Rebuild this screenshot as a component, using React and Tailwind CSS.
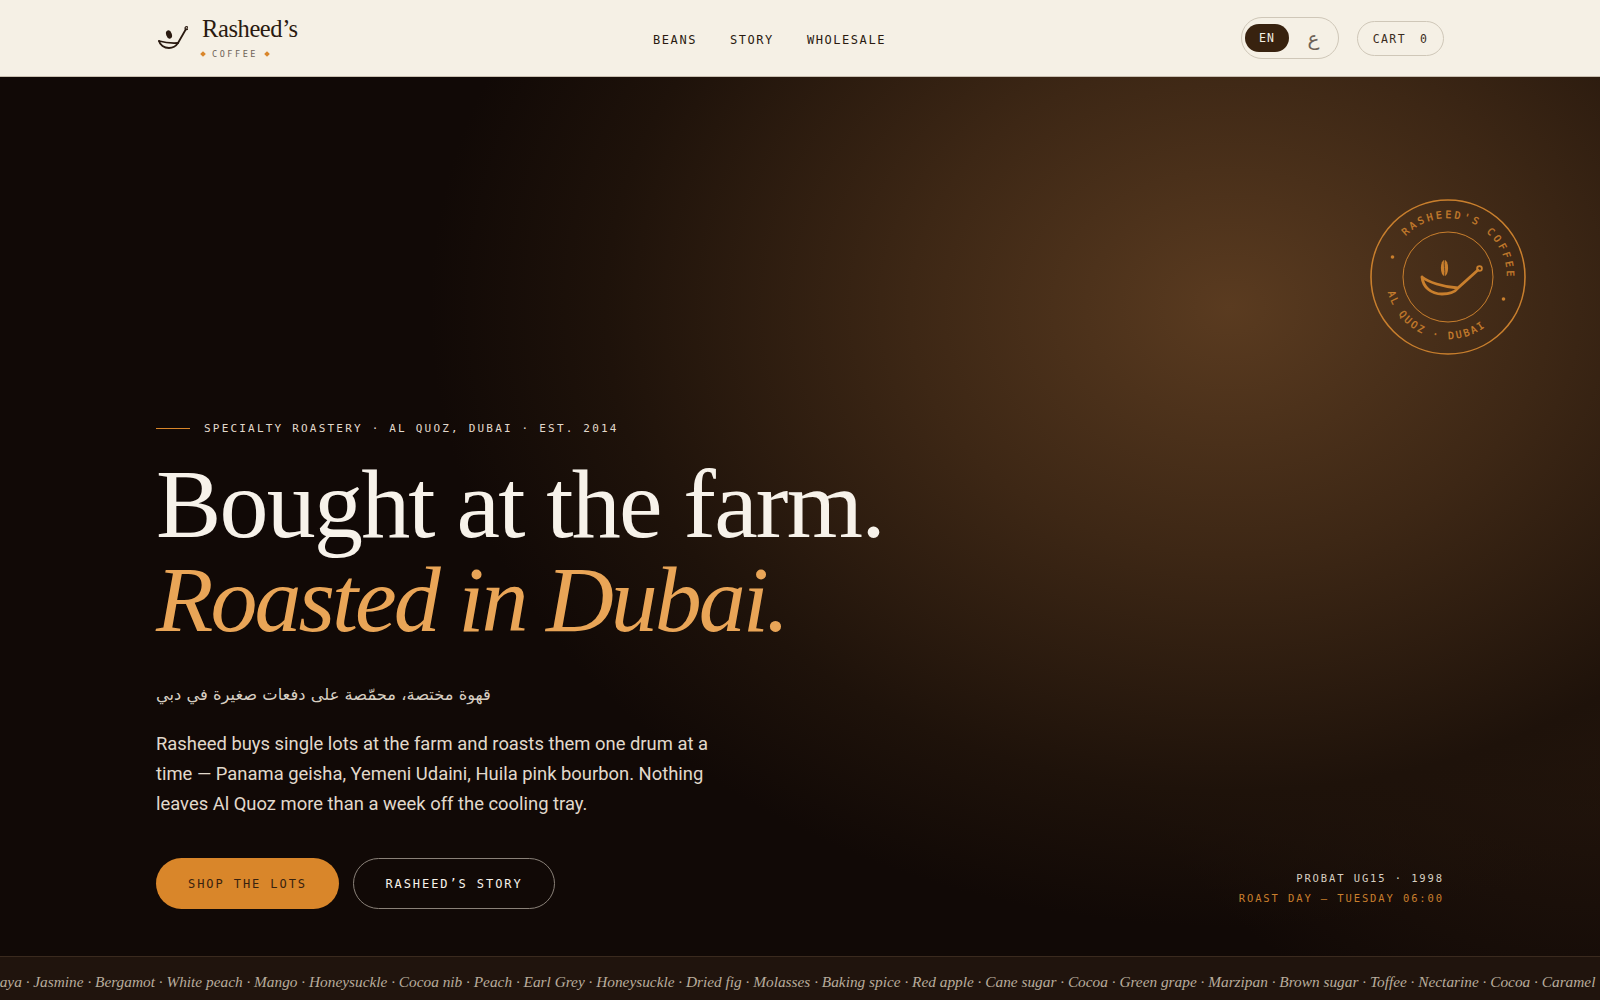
const notes = ["Papaya","Jasmine","Bergamot","White peach","Mango","Honeysuckle","Cocoa nib","Peach","Earl Grey","Honeysuckle","Dried fig","Molasses","Baking spice","Red apple","Cane sugar","Cocoa","Green grape","Marzipan","Brown sugar","Toffee","Nectarine","Cocoa","Caramel"];

function LogoMark() {
  return (
    <svg width="32" height="26" viewBox="0 0 32 26" fill="none" stroke="#2a1a10" strokeLinecap="round" className="shrink-0">
      <path d="M3 16 C8 17.5 14 18.5 22 18" strokeWidth="1.8" />
      <path d="M3 16 C4 20 8 23 13 23 C17 23 20 21 22 18 L30 4" strokeWidth="1.8" />
      <circle cx="30.5" cy="3.2" r="1.5" strokeWidth="1.2" />
      <ellipse cx="13" cy="9.5" rx="2.8" ry="4.2" fill="#2a1a10" stroke="none" transform="rotate(-20 13 9.5)" />
    </svg>
  );
}

function Seal() {
  const c = "#c97f2d";
  return (
    <svg width="160" height="160" viewBox="0 0 160 160" fill="none" className="absolute top-[120px] right-[72px]">
      <defs>
        <path id="sealTop" d="M37.6 39 A59 59 0 0 1 139 80 A59 59 0 0 1 130 110" />
        <path id="sealBottom" d="M19.8 95 A62 62 0 0 0 115.6 130.8 A62 62 0 0 0 138.3 101.2" />
      </defs>
      <circle cx="80" cy="80" r="77" stroke={c} strokeWidth="1.6" />
      <circle cx="80" cy="80" r="45" stroke={c} strokeWidth="1" />
      <circle cx="24.5" cy="60" r="1.8" fill={c} />
      <circle cx="135.5" cy="102" r="1.8" fill={c} />
      <text fill={c} stroke={c} strokeWidth="0.25" fontSize="10" fontFamily="'DejaVu Sans Mono', monospace" letterSpacing="2.85">
        <textPath href="#sealTop">RASHEED'S COFFEE</textPath>
      </text>
      <text fill={c} stroke={c} strokeWidth="0.25" fontSize="10" fontFamily="'DejaVu Sans Mono', monospace" letterSpacing="2.2">
        <textPath href="#sealBottom">AL QUOZ · DUBAI</textPath>
      </text>
      <path d="M54 80 C60 85 75 90 90 91 M54 80 C55 90 63 97 74 97 C82 97 87 95 90 91 L110 73" stroke={c} strokeWidth="2.8" strokeLinecap="round" />
      <circle cx="111.5" cy="71.5" r="2.4" stroke={c} strokeWidth="1.8" />
      <ellipse cx="76.5" cy="71" rx="3.6" ry="8" fill={c} />
      <path d="M76.5 63 C75.5 68 77.5 73 76.5 79" stroke="#5a3b20" strokeWidth="0.9" />
    </svg>
  );
}

export default function App() {
  return (
    <div className="h-[1000px] w-[1600px] overflow-hidden flex flex-col bg-[#0f0805] font-['DejaVu_Sans_Mono',monospace]">
      <header className="h-[77px] shrink-0 bg-[#f5f0e5] border-b border-[#c9bfb0] px-[156px] flex items-center justify-between">
        <div className="w-[142px] flex items-center gap-[14px] whitespace-nowrap">
          <LogoMark />
          <div className="flex flex-col items-start">
            <span className="font-['Liberation_Serif',serif] text-[24.5px] leading-[30px] tracking-[-0.4px] text-[#2a1a10] -mt-[2px]">Rasheed’s</span>
            <span className="flex items-center gap-[7px] mt-[4px] -ml-[1px]">
              <span className="w-[4px] h-[4px] rotate-45 bg-[#d9862a]" />
              <span className="text-[8.5px] leading-[12px] tracking-[0.3em] text-[#6e6358]">COFFEE</span>
              <span className="w-[4px] h-[4px] rotate-45 bg-[#d9862a]" />
            </span>
          </div>
        </div>
        <nav className="flex items-center gap-[33px] mt-[3px] text-[12px] tracking-[0.13em] text-[#2a1a10]">
          <span>BEANS</span>
          <span>STORY</span>
          <span>WHOLESALE</span>
        </nav>
        <div className="flex items-center justify-end gap-[18px]">
          <div className="w-[98px] h-[42px] rounded-full border border-[#cfc7b8] flex items-center pl-[3px]">
            <span className="w-[44px] h-[28px] pt-[1px] rounded-full bg-[#38220f] text-[#f5f0e5] text-[11.5px] tracking-[0.1em] flex items-center justify-center">EN</span>
            <span className="flex-1 text-center text-[20px] leading-none text-[#6e6358] font-['DejaVu_Sans',sans-serif]">ع</span>
          </div>
          <div className="w-[87px] h-[35px] pt-[3px] rounded-full border border-[#cfc7b8] flex items-center justify-center gap-[14px] text-[11.5px] tracking-[0.12em] text-[#3a2c20]">
            <span>CART</span>
            <span>0</span>
          </div>
        </div>
      </header>

      <main className="relative flex-1 flex flex-col justify-end px-[156px] pb-[47px] bg-[#110906]">
        <div className="absolute inset-0 bg-[radial-gradient(ellipse_800px_620px_at_1230px_230px,#5a3b20_0%,#3d2715_40%,#1e120a_78%,rgba(17,9,6,0)_100%),radial-gradient(ellipse_640px_820px_at_1600px_170px,rgba(74,47,25,0.8)_0%,rgba(17,9,6,0)_100%)]" />
        <Seal />
        <div className="relative">
          <div className="flex items-center gap-[14px] text-[11px] tracking-[0.2em] text-[#e2d9cc]">
            <span className="w-[34px] h-px bg-[#d9862a]" />
            <span>SPECIALTY ROASTERY · AL QUOZ, DUBAI · EST. 2014</span>
          </div>
          <h1 className="mt-[20px] font-['Liberation_Serif',serif] font-normal text-[98px] leading-[94px] tracking-[-1.8px] text-[#f7f2ea]">
            Bought at the farm.
            <br />
            <em className="text-[94px] tracking-[-3px] text-[#e9a557]">Roasted in Dubai.</em>
          </h1>
          <p dir="rtl" className="mt-[33px] text-left w-fit font-['DejaVu_Sans',sans-serif] text-[16.3px] leading-[32px] text-[#d8cfc2]">قهوة مختصة، محمّصة على دفعات صغيرة في دبي</p>
          <p className="mt-[18px] w-[560px] font-['Roboto',sans-serif] text-[18.4px] leading-[30px] text-[#e2d9cc]">Rasheed buys single lots at the farm and roasts them one drum at a time — Panama geisha, Yemeni Udaini, Huila pink bourbon. Nothing leaves Al Quoz more than a week off the cooling tray.</p>
          <div className="mt-[39px] flex items-end justify-between">
            <div className="flex gap-[14px]">
              <span className="w-[183px] h-[51px] rounded-full bg-[#d9862a] text-[#38220f] text-[12px] tracking-[0.16em] flex items-center justify-center">SHOP THE LOTS</span>
              <span className="w-[202px] h-[51px] rounded-full border border-[#8a8178] text-[#f7f2ea] text-[12px] tracking-[0.16em] flex items-center justify-center">RASHEED’S STORY</span>
            </div>
            <div className="flex flex-col items-end gap-[7px] pb-[4px] text-[10.5px] leading-[13px] tracking-[0.18em]">
              <span className="text-[#d8cfc2]">PROBAT UG15 · 1998</span>
              <span className="text-[#c97f2d]">ROAST DAY — TUESDAY 06:00</span>
            </div>
          </div>
        </div>
      </main>

      <footer className="h-[44px] shrink-0 pt-[7px] border-t border-[#3a2a1e] bg-[#20140d] overflow-hidden flex items-center">
        <div className="-ml-[25px] whitespace-nowrap font-['Liberation_Serif',serif] italic text-[15.34px] text-[#b8ac9c]">
          {notes.join(" · ")}
        </div>
      </footer>
    </div>
  );
}
